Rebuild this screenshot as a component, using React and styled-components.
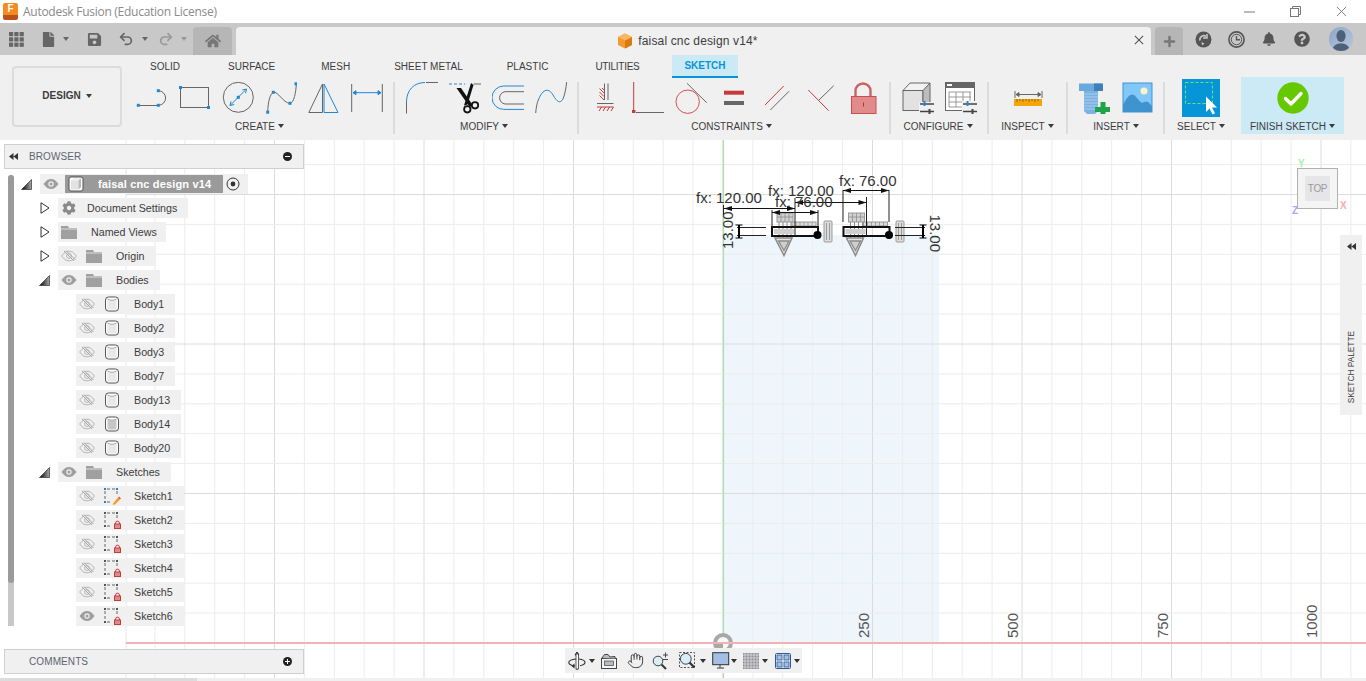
import React from 'react';
import styled, { createGlobalStyle } from 'styled-components';
import { FaHome, FaCog, FaBell, FaQuestionCircle, FaFile, FaSave, FaPlus } from 'react-icons/fa';
import { Undo2, Redo2, Hand } from 'lucide-react';

const Global = createGlobalStyle`
  html, body { margin: 0; padding: 0; background: #fff; overflow: hidden; }
  body { font-family: "Liberation Sans", Arial, sans-serif; color: #3c3c3c; }
  #root { width: 1366px; height: 681px; }
`;

const Page = styled.div`
  width: 1366px; height: 681px; display: flex; flex-direction: column; overflow: hidden;
`;

/* ---------- title bar ---------- */
const TitleBar = styled.div`
  height: 23px; display: flex; align-items: center; background: #fff; flex: none;
`;
const AppLogo = styled.div`
  width: 15px; height: 17px; margin-left: 3px; border-radius: 2px; flex: none;
  background: linear-gradient(#f58a1f 0 68%, #b9521a 68%);
  color: #fff; font: bold 10px/12px "Liberation Sans", sans-serif; text-align: center;
`;
const AppTitle = styled.div`
  margin-left: 5px; font: 12px "Open Sans", sans-serif; color: #8a8a8a; white-space: nowrap; letter-spacing: -0.27px;
`;
const WinControls = styled.div`
  margin-left: auto; display: flex; align-items: center; padding-right: 2px;
`;
const WinButton = styled.div`
  width: 46px; height: 23px; display: flex; align-items: center; justify-content: center;
`;

/* ---------- tab bar ---------- */
const TabBar = styled.div`
  height: 32px; background: #c8c8c8; display: flex; align-items: flex-end; flex: none;
`;
const Quick = styled.div`
  height: 32px; display: flex; align-items: center; justify-content: center; flex: none;
  width: ${p => p.$w}px; margin-left: ${p => p.$ml || 0}px; color: ${p => p.$c || '#666'};
`;
const HomeTab = styled.div`
  width: 39px; height: 28px; margin-left: ${p => p.$ml}px; background: ${p => p.$bg || '#b6b6b6'};
  border-radius: 4px 4px 0 0; display: flex; align-items: center; justify-content: center; color: #777; flex: none;
`;
const DocTab = styled.div`
  width: 915px; height: 28px; margin-left: 4px; background: #f0f0f0; border-radius: 4px 4px 0 0; flex: none;
  display: grid; grid-template-columns: 1fr auto 1fr; align-items: center;
`;
const DocTitle = styled.div`
  grid-column: 2; display: flex; align-items: center; gap: 5px; font-size: 12px; color: #3c3c3c;
  letter-spacing: 0.15px; margin-right: 12px;
`;
const DocClose = styled.div`
  grid-column: 3; justify-self: end; margin-right: 5px; width: 12px; height: 12px; display: flex;
`;
const PlusTab = styled(HomeTab)`
  width: 28px; color: #777;
`;
const Avatar = styled.div`
  width: 24px; height: 24px; border-radius: 50%; margin-left: 13px; overflow: hidden; flex: none;
  background: #9db3cf; align-self: center;
`;

/* ---------- ribbon ---------- */
const Ribbon = styled.div`
  height: 85px; background: #f0f0f0; display: flex; flex: none;
`;
const DesignButton = styled.div`
  width: 106px; margin: 11px 0 0 12px; border: 2px solid #dcdcdc; border-radius: 4px;
  display: flex; align-items: center; justify-content: center; gap: 5px; flex: none; padding-bottom: 2px; box-sizing: content-box;
  height: 55px; font-size: 10px; font-weight: bold; color: #3c3c3c;
`;
const RibbonMain = styled.div`
  margin-left: 7px; display: flex; flex-direction: column;
`;
const Tabs = styled.div`
  height: 23px; display: flex; padding-left: 9px;
`;
const Tab = styled.div`
  padding: 0 12px; display: flex; align-items: center; height: 23px; box-sizing: border-box; font-size: 10px;
  color: ${p => p.$active ? '#0696d7' : '#3c3c3c'}; white-space: nowrap;
  font-weight: ${p => p.$active ? 'bold' : 'normal'};
  background: ${p => p.$active ? '#cce9f6' : 'transparent'};
  border-bottom: ${p => p.$active ? '2px solid #0696d7' : '0'};
  margin-left: ${p => p.$ml || 0}px;
  letter-spacing: ${p => p.$ls || 0}px;
`;
const Groups = styled.div`
  display: flex;
`;
const Group = styled.div`
  width: ${p => p.$w}px; height: 62px; display: flex; flex-direction: column; align-items: center;
  box-sizing: border-box; padding: ${p => p.$pt ?? 4}px ${p => p.$pr || 0}px 0 ${p => p.$pl || 0}px;
`;
const FinishGroup = styled(Group)`
  height: 57px; margin-top: -1px; background: #cce9f6;
`;
const Sep = styled.div`
  width: 2px; height: 52px; margin-top: 4px; background: #dcdcdc; flex: none;
`;
const ToolRow = styled.div`
  display: flex; gap: 11px; height: 32px; align-items: center;
`;
const ToolLabel = styled.div`
  display: flex; align-items: center; gap: 3px; font-size: 10px; color: #3c3c3c; white-space: nowrap;
  margin-top: ${p => p.$mt ?? 6}px; margin-right: ${p => p.$mr || 0}px; height: 12px;
`;
const Caret = styled.span`
  display: inline-block; width: 0; height: 0; flex: none; border-style: solid;
  border-width: 4px 3px 0 3px; border-color: ${p => p.$c || '#3c3c3c'} transparent transparent transparent;
`;

/* ---------- canvas ---------- */
const Canvas = styled.div`
  flex: 1; position: relative; background: #fff; overflow: hidden;
`;
const Drawing = styled.svg`
  position: absolute; left: 0; top: 0; width: 1366px; height: 541px;
`;
const FooterStrip = styled.div`
  position: absolute; left: 0; right: 0; bottom: 0; height: 3px; background: #f0f0f0;
`;
const FooterThumb = styled.div`
  width: 197px; height: 3px; background: #dcdcdc;
`;
const Browser = styled.div`
  position: absolute; left: 4px; top: 4px; width: 300px;
`;
const PanelHead = styled.div`
  height: 25px; box-sizing: border-box; background: #f0f0f0; border: 1px solid #cfcfcf; display: flex; align-items: center;
  padding: 0 11px 0 4px; font-size: 10px; color: #5e6470;
`;
const PanelTitle = styled.div`
  margin-left: ${p => p.$ml}px; flex: 1; letter-spacing: 0.1px;
`;
const Comments = styled(PanelHead)`
  position: absolute; left: 4px; top: 509px; width: 300px;
`;
const TreeBody = styled.div`
  display: flex; position: relative;
`;
const Rail = styled.div`
  width: 6px; height: 451px; margin: 6px 0 0 4px; flex: none; background: #c8c8c8; border-radius: 3px 3px 0 0; overflow: hidden;
`;
const RailThumb = styled.div`
  height: 408px; background: #9a9a9a; border-radius: 0 0 3px 3px;
`;
const Rows = styled.div`
  display: flex; flex-direction: column; gap: 4px; margin: 5px 0 0 0; padding-left: 7px;
`;
const Row = styled.div`
  display: flex; align-items: center; height: 20px; margin-left: ${p => p.$depth * 18}px;
`;
const Arrow = styled.div`
  width: 19px; height: 20px; flex: none; display: flex; align-items: center; justify-content: flex-start;
`;
const Chip = styled.div`
  height: 20px; display: flex; align-items: center; background: #f0f0f0; padding-right: ${p => p.$pr ?? 11}px;
  font-size: 10.7px; color: #3c3c3c; white-space: nowrap;
`;
const Slot = styled.div`
  width: ${p => p.$w}px; height: 20px; display: flex; align-items: center; justify-content: center; flex: none;
`;
const RootLabel = styled.div`
  display: flex; align-items: center; height: 18px; background: #9a9a9a; color: #fff; font-weight: bold; font-size: 11px;
  width: 155px; padding-left: 3px; margin-left: 3px;
`;
const RootText = styled.span`
  margin-left: 14px; letter-spacing: 0.15px;
`;
const ViewCube = styled.div`
  position: absolute; left: 1297px; top: 28px; width: 41px; height: 41px; box-sizing: border-box;
  background: #f4f4f4; border: 1px solid #b0b0b0; display: flex; align-items: center; justify-content: center;
`;
const CubeFace = styled.div`
  width: 25px; height: 25px; background: #e6e6e9; color: #9a9a9f; font-size: 10px; letter-spacing: -0.3px; display: flex; align-items: center; justify-content: center;
`;
const AxisTag = styled.span`
  position: absolute; left: ${p => p.$x}px; top: ${p => p.$y}px; color: ${p => p.$c}; font-size: 10px; font-weight: bold;
`;
const Palette = styled.div`
  position: absolute; left: 1340px; top: 95px; width: 22px; height: 180px; background: #f0f0f0;
  display: flex; flex-direction: column; align-items: center; justify-content: space-between; padding: 8px 0 12px; box-sizing: border-box;
`;
const PaletteText = styled.div`
  writing-mode: vertical-rl; transform: rotate(180deg); font-size: 8.3px; color: #3c3c3c; white-space: nowrap;
`;
const NavBar = styled.div`
  position: absolute; left: 565px; top: 508px; width: 237px; height: 25px; background: #f0f0f0; display: flex; align-items: center;
`;
const NavItem = styled.div`
  margin-left: ${p => p.$ml}px; display: flex; align-items: center; flex: none;
`;

/* ---------- icons ---------- */
const B = '#1e88d8', G = '#666', R = '#c83a3a';
const Sq = ({ x, y, s = 3 }) => <rect x={x - s / 2} y={y - s / 2} width={s} height={s} fill={B} />;
const Ic = ({ w = 32, h = 32, children }) => <svg width={w} height={h} viewBox={`0 0 ${w} ${h}`} fill="none" style={{ display: 'block', flex: 'none' }}>{children}</svg>;

const CreateIcons = () => <>
  <Ic><path d="M3 23.5H22" stroke={G} /><path d="M22.3 8.7A7.3 7.3 0 0 1 22.3 23.3" stroke={G} /><Sq x={2.3} y={23.3} /><Sq x={22.3} y={23.3} /><Sq x={22.3} y={8.7} /></Ic>
  <Ic><rect x="1.5" y="5.5" width="28" height="20" stroke={G} /><Sq x={1.5} y={5.5} /><Sq x={29.5} y={25.5} /></Ic>
  <Ic><circle cx="16.3" cy="15.3" r="15" stroke={G} /><path d="M8 23.5L24.5 7M8 23.5l1-4.2M8 23.5l4.2-1M24.5 7l-4.2 1M24.5 7l-1 4.2" stroke={B} /><Sq x={16.3} y={15.3} /></Ic>
  <Ic><path d="M2.7 30C3 20 5 12 8.3 10.3C13 9 18 21 25 21.3C29 21 31 10 31.3 2" stroke={G} /><Sq x={2.7} y={30.2} /><Sq x={8.3} y={10.3} /><Sq x={25} y={21.3} /><Sq x={31} y={1.8} /></Ic>
  <Ic><path d="M14.5 2V30.5H.8Z" stroke={G} /><path d="M16 2V30.5H30Z" stroke={B} /></Ic>
  <Ic><path d="M.7 2V30M31.3 2V30" stroke={G} /><path d="M2 10.7H30M2 10.7l3-2v4zM30 10.7l-3-2v4z" stroke={B} fill={B} /></Ic>
</>;

const ModifyIcons = () => <>
  <Ic><path d="M.5 20V31.5" stroke={G} /><path d="M.5 20C.5 8 8 .5 19 .5" stroke={B} /><path d="M20 .5H32" stroke={G} /></Ic>
  <Ic><path d="M0 2H16" stroke={B} strokeDasharray="3 2" /><path d="M24.5 2H32" stroke={G} /><path d="M7.5 6L21 25.5L23 22L12 6ZM22 1L15 23.5L18.5 22.5L24.5 3Z" fill="#111" /><circle cx="18.3" cy="27.3" r="3.2" stroke="#111" strokeWidth="1.8" /><circle cx="26" cy="23.3" r="3.2" stroke="#111" strokeWidth="1.8" /></Ic>
  <Ic><path d="M32 4H11.7A11.7 11.7 0 0 0 11.7 27.4H32" stroke={B} /><path d="M32 9.7H13A6.2 6.2 0 0 0 13 22H32" stroke={G} /></Ic>
  <Ic><path d="M.7 31C1 26 2 21 3.3 18" stroke={G} /><path d="M3.3 18C8 6 14 6 18 13C22 20 25 22 28 17" stroke={B} /><path d="M28 17C30 12 31 6 31.7 0" stroke={G} /></Ic>
</>;

const ConstraintIcons = () => <>
  <Ic><path d="M15.5 1.5V18M19 1.5V18M8 21.5H24.5" stroke={G} /><path d="M8 25H24.5M13 6l2 2M10.5 6.5l4.5 4.5M10.5 10l4.5 4.5M10.5 13.5l4.5 4.5M10 29l2.5-4M14 29l2.5-4M18 29l2.5-4M22 29l2.5-4" stroke={R} /></Ic>
  <Ic><path d="M1.7 0V28" stroke={R} /><rect x="0" y="28" width="3.4" height="3" fill={R} /><path d="M4 30.5H32" stroke={G} /></Ic>
  <Ic><circle cx="12.7" cy="19.7" r="11.7" stroke="#d65050" /><path d="M12 1.3L31.7 20.7" stroke={G} /></Ic>
  <Ic><rect x="6" y="8.7" width="20" height="4" fill={R} /><rect x="6" y="19" width="20" height="4" fill={G} /></Ic>
  <Ic><path d="M4 23L22.7 4" stroke={R} /><path d="M9.3 28L28 9.3" stroke={G} /></Ic>
  <Ic><path d="M4.3 8L24.7 28.7" stroke={R} /><path d="M15 18L29.7 3.7" stroke={G} /></Ic>
  <Ic><path d="M8.5 14V9A7.5 7.5 0 0 1 23.5 9V14" stroke="#d06060" strokeWidth="2.4" /><rect x="4.5" y="14.5" width="24.5" height="17" fill="#e08c8c" stroke="#c85050" /><path d="M16.5 20.5V24.5" stroke="#b03030" /></Ic>
</>;

const Sliders = ({ x, y }) => <g transform={`translate(${x} ${y})`}><path d="M0 0H14M0 7.5H14" stroke="#444" strokeWidth="1.6" /><rect x="3.5" y="-3" width="2" height="5" fill={B} /><rect x="8.5" y="5" width="2" height="5" fill="#444" /></g>;

const ConfigIcons = () => <>
  <Ic><path d="M1 8.5L8 1H21L21.5 8.5Z" fill="#f2f2f2" /><rect x="1" y="8.5" width="20" height="20" fill="#e2e2e2" stroke={G} /><path d="M21 8.5L28 1V22L21 28.5Z" fill="#bdbdbd" stroke={G} /><path d="M1 8.5L8 1H28" stroke={G} /><rect x="17" y="20" width="15" height="12" fill="#f0f0f0" /><Sliders x={18} y={22} /></Ic>
  <Ic><rect x=".5" y=".5" width="29" height="28" fill="#fff" stroke={G} /><rect x="0" y="0" width="30" height="6" fill={G} /><rect x="2" y="2" width="5" height="2" fill="#fff" /><path d="M4 10H26M4 15H26M4 20H26M4 25H26M4 10V25M11 10V25M18 10V25M25 10V25" stroke="#999" /><rect x="17" y="19" width="15" height="13" fill="#f0f0f0" /><Sliders x={18} y={22} /></Ic>
</>;

const RulerIcon = () => <Ic><path d="M3 9V16M30 9V16M4 12.5H29M4 12.5l3-2v4zM29 12.5l-3-2v4z" stroke={G} fill={G} /><rect x="2" y="17" width="28" height="7" fill="#f2a60c" /><path d="M5 17v3M8 17v2M11 17v3M14 17v2M17 17v3M20 17v2M23 17v3M26 17v2" stroke="#9a6a00" /></Ic>;

const InsertIcons = () => <>
  <Ic><path d="M0 1.5H22L24 3V9H0Z" fill="#6aa9de" /><rect x="15" y="1.5" width="9" height="7.5" fill="#3f80bc" /><path d="M5 9H19V29L16 32H8L5 29Z" fill="#7ab2e2" /><path d="M5 12H19M5 15H19M5 18H19M5 21H19M5 24H19M5 27H19" stroke="#a9cdec" /><path d="M21.5 20H26.5V25H31V30H26.5V32H21.5V30H16V25H21.5Z" fill="#1fa24a" /></Ic>
  <Ic><rect x="1" y="1" width="29" height="29" fill="#82c7fa" /><circle cx="22" cy="9" r="3.5" fill="#fff3c4" /><path d="M1 23C6 13 10 10 14 15C18 19 19 22 22 20C26 18 28 22 30 24V30H1Z" fill="#3f93cf" /><rect x="1" y="1" width="29" height="29" stroke="#3f93cf" /></Ic>
</>;

const SelectIcon = () => <Ic w={38} h={38}><rect width="38" height="38" fill="#0696d7" /><rect x="3.5" y="3.5" width="27" height="21" stroke="#6fe07a" strokeDasharray="3 2" /><path d="M24 17.5V33L27.5 29.5L30.5 35.5L33 34.3L30 28.5H35Z" fill="#fff" /></Ic>;

const FinishIcon = () => <Ic><circle cx="16" cy="16" r="15.7" fill="#66c800" /><path d="M8.5 16.5L14 22L24 11.5" stroke="#fff" strokeWidth="3.4" strokeLinecap="round" strokeLinejoin="round" /></Ic>;

const Eye = ({ off }) => off ? (
  <svg width="16" height="12" viewBox="0 0 16 12" fill="none"><path d="M.7 6C3 2.5 5.5 1.2 8 1.2S13 2.5 15.3 6C13 9.5 10.5 10.8 8 10.8S3 9.5.7 6Z" stroke="#b5b5b5" /><circle cx="8" cy="6" r="2.4" stroke="#b5b5b5" /><path d="M3 1L13 11M5 .5L14.5 10" stroke="#aaa" /></svg>
) : (
  <svg width="16" height="12" viewBox="0 0 16 12"><path d="M.5 6C3 2.3 5.5 1 8 1S13 2.3 15.5 6C13 9.7 10.5 11 8 11S3 9.7.5 6Z" fill="#9e9e9e" /><circle cx="8" cy="6" r="2.7" fill="#f0f0f0" /><circle cx="8" cy="6" r="1.5" fill="#9e9e9e" /></svg>
);
const Folder = () => <svg width="16" height="13" viewBox="0 0 16 13"><path d="M0 0H7L8 2H16V13H0Z" fill="#a0a0a0" /><path d="M0 3H16" stroke="#dcdcdc" /></svg>;
const BodyIcon = ({ dark }) => <svg width="16" height="16" viewBox="0 0 16 16"><rect x="1.5" y="1" width="13" height="14" rx="3" fill="#fff" stroke="#555" /><path d="M3.5 3.2H12.5V13.5H3.5Z" fill={dark ? '#c6c6c6' : '#e8e8e8'} /><path d="M3.5 3.2Q8 5.6 12.5 3.2" stroke="#aaa" fill="#fff" /></svg>;
const SketchIcon = ({ edit }) => <svg width="18" height="18" viewBox="0 0 18 18" fill="none"><path d="M4 2H12M2 4V13M4 15H8M14 4V8" stroke="#666" strokeDasharray="3 2" /><rect x="1" y="1" width="2" height="2" fill={edit ? B : '#555'} /><rect x="13" y="1" width="2" height="2" fill={edit ? B : '#555'} /><rect x="1" y="14" width="2" height="2" fill={edit ? B : '#555'} />{edit
  ? <><path d="M10 16.5L15 10.5L17 12.5L12 17.5L9.8 17.8Z" fill="#f0a020" /><path d="M15 10.5L16 9.5L18 11.5L17 12.5Z" fill="#e05050" /></>
  : <><path d="M12.6 13V12A1.9 1.9 0 0 1 16.4 12V13" stroke={R} /><rect x="11.5" y="13" width="6" height="4.5" fill="#e08c8c" stroke={R} /></>}</svg>;
const Gear = () => <FaCog size={14} color="#8a8a8a" />;
const RootCube = () => <svg width="16" height="16" viewBox="0 0 16 16" style={{ flex: 'none' }}><rect x="1" y="1" width="14" height="14" rx="2" fill="#fff" stroke="#555" /><path d="M3 4.5L6 2H13L10.5 4.5Z" fill="#eee" /><rect x="3" y="4.5" width="7.5" height="9" fill="#e2e2e2" /><path d="M10.5 4.5L13 2V11L10.5 13.5Z" fill="#b8b8b8" /></svg>;
const Radio = () => <svg width="14" height="14" viewBox="0 0 14 14" fill="none"><circle cx="7" cy="7" r="6" stroke="#333" /><circle cx="7" cy="7" r="2.4" fill="#333" /></svg>;
const TriOpen = () => <svg width="11" height="11" viewBox="0 0 11 11"><defs><linearGradient id="tg" x1="0" x2="1"><stop offset="0" stopColor="#000" /><stop offset="1" stopColor="#aaa" /></linearGradient></defs><path d="M.5 10.5L10.5 .5V10.5Z" fill="url(#tg)" stroke="#333" strokeWidth=".7" /></svg>;
const TriClosed = () => <svg width="10" height="12" viewBox="0 0 10 12" style={{ marginLeft: 1 }}><path d="M1 .7L9 6L1 11.3Z" fill="#fff" stroke="#333" /></svg>;
const DoubleArrow = () => <svg width="9" height="7" viewBox="0 0 9 7" style={{ flex: 'none' }}><path d="M4.5 0V7L0 3.5ZM9 0V7L4.5 3.5Z" fill="#333" /></svg>;

const CloseX = ({ s = 12, c = '#555', w = 1 }) => <svg width={s} height={s} viewBox="0 0 12 12"><path d="M1 1L11 11M11 1L1 11" stroke={c} strokeWidth={w} /></svg>;
const AppsIcon = () => <svg width="15" height="15" viewBox="0 0 15 15" fill="#666">{[0, 5.3, 10.6].flatMap(x => [0, 5.3, 10.6].map(y => <rect key={`${x}-${y}`} x={x} y={y} width="4.2" height="4.2" />))}</svg>;
const OnlineIcon = () => <svg width="17" height="17" viewBox="0 0 17 17" fill="none"><circle cx="8.5" cy="8.5" r="8" fill="#555" /><path d="M5 9.5A4 4 0 0 1 11 5.2" stroke="#c8c8c8" strokeWidth="1.7" /><path d="M12 3V7H8" stroke="#c8c8c8" strokeWidth="1.5" /><path d="M9.5 12.5L7 14.5L6.5 11" fill="#c8c8c8" /></svg>;
const ClockIcon = () => <svg width="17" height="17" viewBox="0 0 17 17" fill="none"><circle cx="8.5" cy="8.5" r="7.6" stroke="#555" strokeWidth="1.6" /><circle cx="8.5" cy="8.5" r="5.2" fill="#c8c8c8" stroke="#555" /><path d="M8.5 5V8.8H12" stroke="#555" strokeWidth="1.4" /></svg>;
const Person = () => <svg width="24" height="24" viewBox="0 0 24 24"><defs><linearGradient id="av" x1="0" y1="0" x2="1" y2="1"><stop offset="0" stopColor="#8fa6c6" /><stop offset="1" stopColor="#b6c8de" /></linearGradient></defs><rect width="24" height="24" fill="url(#av)" /><ellipse cx="12" cy="9" rx="4.6" ry="6" fill="#4e5f78" /><path d="M3 24C4 18 8 16.5 12 16.5S20 18 21 24Z" fill="#4e5f78" /></svg>;
const DocCube = () => <svg width="16" height="16" viewBox="0 0 16 16"><path d="M8 0.5L15 4V12L8 15.5L1 12V4Z" fill="#f59a2c" /><path d="M8 7.5L15 4V12L8 15.5Z" fill="#d97a12" /><path d="M8 7.5L1 4L8 .5L15 4Z" fill="#fbb660" /></svg>;

const OrbitIcon = () => <svg width="18" height="20" viewBox="0 0 18 20" fill="none"><path d="M9 1V19M9 1L7 4H11Z" stroke="#333" /><rect x="8" y="3" width="2.4" height="15" fill="#fff" stroke="#333" strokeWidth=".8" /><path d="M8 8C3 8.5 .8 10 .8 11.5S3 14.5 7 15M11 8C15 8.5 17 10 17 11.5S15 14 12 14.8" stroke="#333" strokeWidth="1.1" /><path d="M6.5 12.5L3.5 15L6.5 17.5Z" fill="#333" /></svg>;
const CaptureIcon = () => <svg width="16" height="16" viewBox="0 0 16 16" fill="none"><rect x=".5" y="5.5" width="15" height="10" fill="#f5f5f5" stroke="#444" /><path d="M1 5L3.5 1.5H7L9 4L14 3.5V5.5" stroke="#444" fill="#bbb" /><rect x="3.5" y="8" width="9" height="4.5" fill="#b0bcc6" stroke="#444" strokeWidth=".7" /></svg>;
const ZoomPM = () => <svg width="18" height="18" viewBox="0 0 18 18" fill="none"><circle cx="6" cy="9" r="4.8" fill="#d8eef8" stroke="#444" /><path d="M9.5 12.5L14 17" stroke="#333" strokeWidth="2" /><path d="M11 3H16M13.5 .5V5.5M11 7.5H16" stroke="#444" /></svg>;
const FitIcon = () => <svg width="17" height="17" viewBox="0 0 17 17" fill="none"><rect x=".5" y=".5" width="15" height="15" stroke="#555" strokeDasharray="2 1.5" /><circle cx="6.8" cy="6.8" r="5.4" fill="#d8eef8" stroke="#444" /><path d="M10.5 10.5L15.5 15.5" stroke="#333" strokeWidth="2.2" /></svg>;
const DisplayIcon = () => <svg width="18" height="17" viewBox="0 0 18 17" fill="none"><rect x=".7" y=".7" width="16" height="12" fill="#a3bfe6" stroke="#333" /><path d="M8 13V15.5M5 16H12" stroke="#333" /></svg>;
const GridIcon = () => <svg width="16" height="16" viewBox="0 0 16 16" fill="#aaa"><rect width="16" height="16" fill="#8f8f98" />{[2, 5, 8, 11, 14].map(v => <React.Fragment key={v}><path d={`M${v} 0V16M0 ${v}H16`} stroke="#e6e6e6" strokeWidth=".7" /></React.Fragment>)}</svg>;
const ViewsIcon = () => <svg width="16" height="16" viewBox="0 0 16 16"><rect x=".5" y=".5" width="15" height="15" rx="1" fill="#e8eef6" stroke="#2e5a92" /><rect x="2" y="2" width="5" height="5" fill="#a3bfe6" stroke="#2e5a92" strokeWidth=".8" /><rect x="9" y="2" width="5" height="5" fill="#a3bfe6" stroke="#2e5a92" strokeWidth=".8" /><rect x="2" y="9" width="5" height="5" fill="#a3bfe6" stroke="#2e5a92" strokeWidth=".8" /><rect x="9" y="9" width="5" height="5" fill="#a3bfe6" stroke="#2e5a92" strokeWidth=".8" /></svg>;

/* ---------- canvas drawing ---------- */
const range = (start, end, step) => { const a = []; for (let v = start; v <= end; v += step) a.push(v); return a; };
const xsMinor = [...range(723, 1366, 29.9), ...range(-723, -126, 29.9).map(v => -v).filter(v => v >= 126)];
const ysMinor = range(-643, -140, 29.9).map(v => -v);

const Dim = ({ x1, x2, y }) => <g><path d={`M${x1} ${y}H${x2}`} stroke="#111" strokeWidth="1" /><path d={`M${x1} ${y}l8 -2.4v4.8zM${x2} ${y}l-8 -2.4v4.8z`} fill="#111" /></g>;

const Feature = ({ dx }) => <g transform={`translate(${dx} 0)`}>
  <rect x="777" y="213" width="16" height="9" fill="#d0d0d0" stroke="#9a9a9a" />
  <path d="M777 217H793M781 213V222M785 213V222M789 213V222" stroke="#888" strokeWidth=".7" />
  <rect x="792" y="222" width="24" height="4" fill="#ddd" stroke="#9a9a9a" />
  <path d="M796 222V226M800 222V226M804 222V226M808 222V226M812 222V226" stroke="#888" strokeWidth=".7" />
  <path d="M779 222V238M783 222V238M787 222V238M791 222V238" stroke="#8a8a8a" />
  <path d="M775 238H792L784 255.5Z" fill="#e4e4e4" stroke="#8a8a8a" strokeWidth="1.5" />
  <path d="M778.5 241H789L784 250.5Z" fill="#cfcfcf" stroke="#8a8a8a" strokeWidth="1.3" />
  <rect x="774" y="229" width="20" height="5" fill="#cfcfcf" />
</g>;
const Clip = ({ x }) => <g><rect x={x} y="221" width="8" height="21" rx="1" fill="#dcdcdc" stroke="#9a9a9a" /><path d={`M${x + 2.5} 223V240M${x + 5.5} 223V240`} stroke="#8a8a8a" strokeWidth=".8" /></g>;

const SceneText = styled.text`
  font-family: "Liberation Sans", Arial, sans-serif; font-size: 15px; fill: ${p => p.$c || '#333'};
`;

const Scene = () => (
  <Drawing viewBox="0 140 1366 541">
    <rect x="723" y="235" width="216" height="408" fill="#eef6fc" />
    {xsMinor.map((x, i) => <path key={`v${i}`} d={`M${x} 140V678`} stroke={Math.abs(x - 723) % 149.5 < 1 || Math.abs(Math.abs(x - 723) % 149.5 - 149.5) < 1 ? '#dcdcdc' : '#ececec'} />)}
    {ysMinor.map((y, i) => <path key={`h${i}`} d={`M126 ${y}H1366`} stroke={i % 5 === 0 ? '#dcdcdc' : '#ececec'} />)}
    <path d="M126 140V678" stroke="#e6e6e6" />
    <path d="M723.5 140V681" stroke="#a8e6a8" strokeWidth="1.2" />
    <circle cx="723" cy="643" r="8" fill="#f8f8f8" stroke="#a8a8a8" strokeWidth="4" />
    <path d="M723 643H715A8 8 0 0 0 723 651Z" fill="#a8a8a8" />
    <path d="M126 643H1366" stroke="#f0b2b2" strokeWidth="2" />
    {[[869, '250'], [1018, '500'], [1168, '750'], [1317, '1000']].map(([x, t]) => (
      <SceneText key={t} $c="#555" transform={`translate(${x} 638) rotate(-90)`}>{t}</SceneText>
    ))}
    <Feature dx={0} /><Feature dx={71.5} />
    <Clip x={824} /><Clip x={896} />
    <rect x="772" y="227" width="46" height="9" fill="none" stroke="#111" strokeWidth="2" />
    <rect x="843.5" y="227" width="46" height="9" fill="none" stroke="#111" strokeWidth="2" />
    <circle cx="817.5" cy="235" r="4" fill="#000" /><circle cx="889" cy="235" r="4" fill="#000" />
    <path d="M795 198V236M772 210V227M818 210V227M866.5 197V236M843 190V222M889 190V222M723.5 205V215" stroke="#222" />
    <path d="M737 227.5H766M737 235.5H766M895 227.5H925M895 235.5H925" stroke="#222" />
    <path d="M739 225V238M923 225V238" stroke="#000" strokeWidth="2" />
    <path d="M735.5 225H742.5M735.5 238H742.5M919.5 225H926.5M919.5 238H926.5" stroke="#000" />
    <Dim x1={724} x2={795} y={208.5} />
    <Dim x1={795} x2={866.5} y={202.5} />
    <Dim x1={772} x2={818} y={212.5} />
    <Dim x1={843} x2={889} y={190.5} />
    <SceneText x="696" y="203">fx: 120.00</SceneText>
    <SceneText x="768" y="196">fx: 120.00</SceneText>
    <SceneText x="775" y="207">fx: 76.00</SceneText>
    <SceneText x="839" y="186">fx: 76.00</SceneText>
    <SceneText transform="translate(733 249) rotate(-90)">13.00</SceneText>
    <SceneText transform="translate(930 214.5) rotate(90)">13.00</SceneText>
  </Drawing>
);

/* ---------- tree ---------- */
const bodies = ['Body1', 'Body2', 'Body3', 'Body7', 'Body13', 'Body14', 'Body20'];
const sketches = ['Sketch1', 'Sketch2', 'Sketch3', 'Sketch4', 'Sketch5', 'Sketch6'];

const TreeFolder = ({ label, open, off, noEye, icon, pr, labelW = 8 }) => (
  <Row $depth={1}>
    <Arrow>{open ? <TriOpen /> : <TriClosed />}</Arrow>
    <Chip $pr={pr}>
      {!noEye && <Slot $w={22}><Eye off={off} /></Slot>}
      <Slot $w={noEye ? 21 : 28}>{icon || <Folder />}</Slot>
      <Slot $w={labelW} />
      {label}
    </Chip>
  </Row>
);

const Leaf = ({ label, icon, off }) => (
  <Row $depth={2}>
    <Arrow />
    <Chip>
      <Slot $w={22}><Eye off={off} /></Slot>
      <Slot $w={28}>{icon}</Slot>
      <Slot $w={8} />
      {label}
    </Chip>
  </Row>
);

const tabs = [['SOLID', 0], ['SURFACE', 24], ['MESH', 22], ['SHEET METAL', 20], ['PLASTIC', 20], ['UTILITIES', 23, -0.3]];

export default function App() {
  return (
    <Page>
      <Global />
      <TitleBar>
        <AppLogo>F</AppLogo>
        <AppTitle>Autodesk Fusion (Education License)</AppTitle>
        <WinControls>
          <WinButton><svg width="11" height="2"><path d="M0 1H11" stroke="#777" /></svg></WinButton>
          <WinButton><svg width="11" height="11" fill="none"><path d="M2.5 2.5V.5H10.5V8.5H8.5" stroke="#777" /><rect x=".5" y="2.5" width="8" height="8" stroke="#777" /></svg></WinButton>
          <WinButton><CloseX s={11} c="#777" /></WinButton>
        </WinControls>
      </TitleBar>

      <TabBar>
        <Quick $w={33}><AppsIcon /></Quick>
        <Quick $w={17} $ml={7}><FaFile size={15} /></Quick>
        <Quick $w={14} $ml={2}><Caret $c="#666" /></Quick>
        <Quick $w={18} $ml={12}><FaSave size={15} /></Quick>
        <Quick $w={20} $ml={13}><Undo2 size={16} strokeWidth={2.6} /></Quick>
        <Quick $w={10} $ml={4}><Caret $c="#666" /></Quick>
        <Quick $w={20} $ml={6} $c="#999"><Redo2 size={16} strokeWidth={2.6} /></Quick>
        <Quick $w={10} $ml={3} $c="#999"><Caret $c="#999" /></Quick>
        <HomeTab $ml={4}><FaHome size={16} /></HomeTab>
        <DocTab>
          <DocTitle><DocCube />faisal cnc design v14*</DocTitle>
          <DocClose><CloseX s={10} c="#555" w={1.3} /></DocClose>
        </DocTab>
        <PlusTab $ml={4}><FaPlus size={13} /></PlusTab>
        <Quick $w={38} $ml={1} $c="#555"><OnlineIcon /></Quick>
        <Quick $w={28} $c="#555"><ClockIcon /></Quick>
        <Quick $w={38} $c="#555"><FaBell size={14} /></Quick>
        <Quick $w={28} $c="#555"><FaQuestionCircle size={16} /></Quick>
        <Avatar><Person /></Avatar>
      </TabBar>

      <Ribbon>
        <DesignButton>DESIGN <Caret /></DesignButton>
        <RibbonMain>
          <Tabs>
            {tabs.map(([t, ml, ls]) => <Tab key={t} $ml={ml} $ls={ls}>{t}</Tab>)}
            <Tab $active $ml={21}>SKETCH</Tab>
          </Tabs>
          <Groups>
            <Group $w={264} $pr={3}><ToolRow><CreateIcons /></ToolRow><ToolLabel>CREATE <Caret /></ToolLabel></Group>
            <Sep />
            <Group $w={182}><ToolRow><ModifyIcons /></ToolRow><ToolLabel $mr={4}>MODIFY <Caret /></ToolLabel></Group>
            <Sep />
            <Group $w={310}><ToolRow><ConstraintIcons /></ToolRow><ToolLabel $mr={5}>CONSTRAINTS <Caret /></ToolLabel></Group>
            <Sep />
            <Group $w={96}><ToolRow><ConfigIcons /></ToolRow><ToolLabel $mr={2}>CONFIGURE <Caret /></ToolLabel></Group>
            <Sep />
            <Group $w={77}><ToolRow><RulerIcon /></ToolRow><ToolLabel>INSPECT <Caret /></ToolLabel></Group>
            <Sep />
            <Group $w={95} $pl={1}><ToolRow><InsertIcons /></ToolRow><ToolLabel>INSERT <Caret /></ToolLabel></Group>
            <Sep />
            <Group $w={76} $pt={1} $pr={4}><SelectIcon /><ToolLabel $mt={3}>SELECT <Caret /></ToolLabel></Group>
            <FinishGroup $w={103} $pt={5}><ToolRow><FinishIcon /></ToolRow><ToolLabel>FINISH SKETCH <Caret /></ToolLabel></FinishGroup>
          </Groups>
        </RibbonMain>
      </Ribbon>

      <Canvas>
        <Scene />
        <Browser>
          <PanelHead>
            <DoubleArrow />
            <PanelTitle $ml={11}>BROWSER</PanelTitle>
            <svg width="9" height="9" viewBox="0 0 9 9"><circle cx="4.5" cy="4.5" r="4.5" fill="#222" /><path d="M2 4.5H7" stroke="#fff" /></svg>
          </PanelHead>
          <TreeBody>
            <Rail><RailThumb /></Rail>
            <Rows>
              <Row $depth={0}>
                <Arrow><TriOpen /></Arrow>
                <Chip $pr={5}>
                  <Slot $w={22}><Eye /></Slot>
                  <RootLabel><RootCube /><RootText>faisal cnc design v14</RootText></RootLabel>
                  <Slot $w={20}><Radio /></Slot>
                </Chip>
              </Row>
              <TreeFolder label="Document Settings" noEye icon={<Gear />} pr={11} labelW={8} />
              <TreeFolder label="Named Views" noEye pr={9} labelW={12} />
              <TreeFolder label="Origin" off />
              <TreeFolder label="Bodies" open />
              {bodies.map((b, i) => <Leaf key={b} label={b} off icon={<BodyIcon dark={i === 5} />} />)}
              <TreeFolder label="Sketches" open />
              {sketches.map((s, i) => <Leaf key={s} label={s} off={i < 5} icon={<SketchIcon edit={i === 0} />} />)}
            </Rows>
          </TreeBody>
        </Browser>
        <Comments>
          <PanelTitle $ml={20}>COMMENTS</PanelTitle>
          <svg width="9" height="9" viewBox="0 0 9 9"><circle cx="4.5" cy="4.5" r="4.5" fill="#222" /><path d="M2 4.5H7M4.5 2V7" stroke="#fff" /></svg>
        </Comments>
        <ViewCube><CubeFace>TOP</CubeFace></ViewCube>
        <AxisTag $x={1298} $y={18} $c="#a6f0a6">Y</AxisTag>
        <AxisTag $x={1340} $y={60} $c="#ffa8a8">X</AxisTag>
        <AxisTag $x={1292} $y={65} $c="#a8a8ff">Z</AxisTag>
        <Palette>
          <DoubleArrow />
          <PaletteText>SKETCH PALETTE</PaletteText>
        </Palette>
        <NavBar>
          <NavItem $ml={3}><OrbitIcon /></NavItem>
          <NavItem $ml={3}><Caret $c="#333" /></NavItem>
          <NavItem $ml={6}><CaptureIcon /></NavItem>
          <NavItem $ml={10}><Hand size={17} strokeWidth={1.3} color="#333" /></NavItem>
          <NavItem $ml={8}><ZoomPM /></NavItem>
          <NavItem $ml={9}><FitIcon /></NavItem>
          <NavItem $ml={4}><Caret $c="#333" /></NavItem>
          <NavItem $ml={6}><DisplayIcon /></NavItem>
          <NavItem $ml={1}><Caret $c="#333" /></NavItem>
          <NavItem $ml={6}><GridIcon /></NavItem>
          <NavItem $ml={3}><Caret $c="#333" /></NavItem>
          <NavItem $ml={7}><ViewsIcon /></NavItem>
          <NavItem $ml={3}><Caret $c="#333" /></NavItem>
        </NavBar>
        <FooterStrip><FooterThumb /></FooterStrip>
      </Canvas>
    </Page>
  );
}
